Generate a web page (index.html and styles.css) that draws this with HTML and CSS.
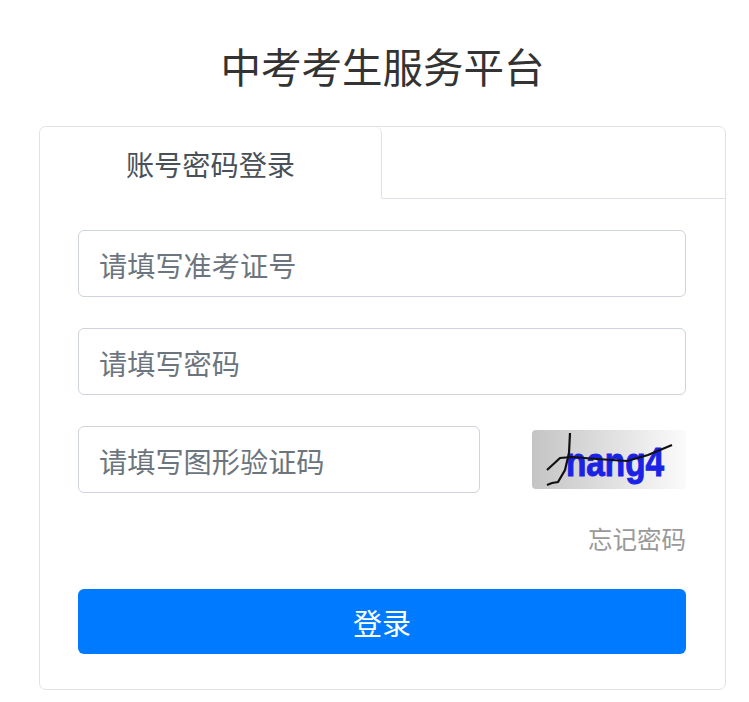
FILE: index.html
```html
<!DOCTYPE html>
<html lang="zh-CN">
<head>
  <meta charset="UTF-8">
  <meta name="viewport" content="width=device-width, initial-scale=1.0">
  <title>中考考生服务平台</title>
  <link rel="stylesheet" href="styles.css">
</head>
<body>

  <h1 class="title">中考考生服务平台</h1>

  <div class="card">
    <div class="tabs">
      <div class="tab">账号密码登录</div>
    </div>

    <form class="login-form">
      <input class="field" type="text" placeholder="请填写准考证号">
      <input class="field" type="password" placeholder="请填写密码">

      <div class="captcha-row">
        <input class="field captcha-field" type="text" placeholder="请填写图形验证码">
        <svg class="captcha" width="154" height="59" viewBox="0 0 154 59">
          <defs>
            <linearGradient id="captcha-bg" x1="0" y1="0" x2="1" y2="0">
              <stop offset="0" stop-color="#c4c4c4"/>
              <stop offset="0.55" stop-color="#e2e2e2"/>
              <stop offset="1" stop-color="#fbfbfb"/>
            </linearGradient>
          </defs>
          <rect width="154" height="59" rx="4" fill="url(#captcha-bg)"/>
          <text class="captcha-text" x="34" y="46" textLength="98" lengthAdjust="spacingAndGlyphs">nang4</text>
          <path class="captcha-line" d="M15 40 L28 28 L40 27 L65 29 L95 31 L116 25 L128 20 L140 15"/>
          <path class="captcha-line" d="M38 3 L37 23 L33 40 L26 52 L20 53 L15 55"/>
        </svg>
      </div>

      <div class="forgot-row">
        <a class="forgot" href="#">忘记密码</a>
      </div>

      <button class="submit" type="button">登录</button>
    </form>
  </div>

</body>
</html>
```

FILE: styles.css
```css
html, body {
  height: 100%;
}

body {
  margin: 0;
  padding: 0 23px 0 39px;
  overflow: hidden;
  background: #fff;
  color: #333;
  font-family: "Liberation Sans", "Noto Sans CJK SC", sans-serif;
}

.title {
  margin: 0;
  padding-top: 42px;
  height: 126px;
  box-sizing: border-box;
  text-align: center;
  font-size: 40.5px;
  line-height: 54px;
  font-weight: 400;
  color: #333;
}

.card {
  box-sizing: border-box;
  height: 564px;
  border: 1px solid #e2e2e2;
  border-radius: 7px;
}

.tabs {
  height: 72px;
  box-sizing: border-box;
  border-bottom: 1px solid #dee2e6;
}

.tab {
  box-sizing: border-box;
  width: 342px;
  height: 72px;
  background: #fff;
  border-right: 1px solid #dee2e6;
  border-bottom: 1px solid #fff;
  border-radius: 7px 7px 0 0;
  text-align: center;
  font-size: 28.2px;
  line-height: 78px;
  color: #495057;
}

.login-form {
  display: flex;
  flex-direction: column;
  padding: 31px 39px 0 38px;
}

.field {
  box-sizing: border-box;
  width: 100%;
  height: 67px;
  margin-bottom: 31px;
  padding: 7px 20px 0;
  border: 1px solid #ced4da;
  border-radius: 6px;
  background: #fff;
  font-family: inherit;
  font-size: 28.2px;
  color: #495057;
}

.field::placeholder {
  color: #6c757d;
  opacity: 1;
}

.captcha-row {
  display: flex;
  justify-content: space-between;
  align-items: flex-start;
}

.captcha-field {
  width: 402px;
  margin-bottom: 0;
}

.captcha {
  display: block;
  margin-top: 4px;
}

.captcha-text {
  font-family: "Liberation Sans", sans-serif;
  font-size: 40px;
  font-weight: 700;
  fill: #1a22e6;
  stroke: #1a22e6;
  stroke-width: 1;
}

.captcha-line {
  fill: none;
  stroke: #111;
  stroke-width: 2.2;
}

.forgot-row {
  display: flex;
  justify-content: flex-end;
  margin-top: 29px;
  height: 38px;
}

.forgot {
  font-size: 24.5px;
  line-height: 38px;
  color: #999;
  text-decoration: none;
}

.submit {
  display: block;
  margin-top: 29px;
  height: 65px;
  border: none;
  border-radius: 6px;
  background: #007bff;
  color: #fff;
  font-family: inherit;
  font-size: 29px;
  cursor: pointer;
}
```
